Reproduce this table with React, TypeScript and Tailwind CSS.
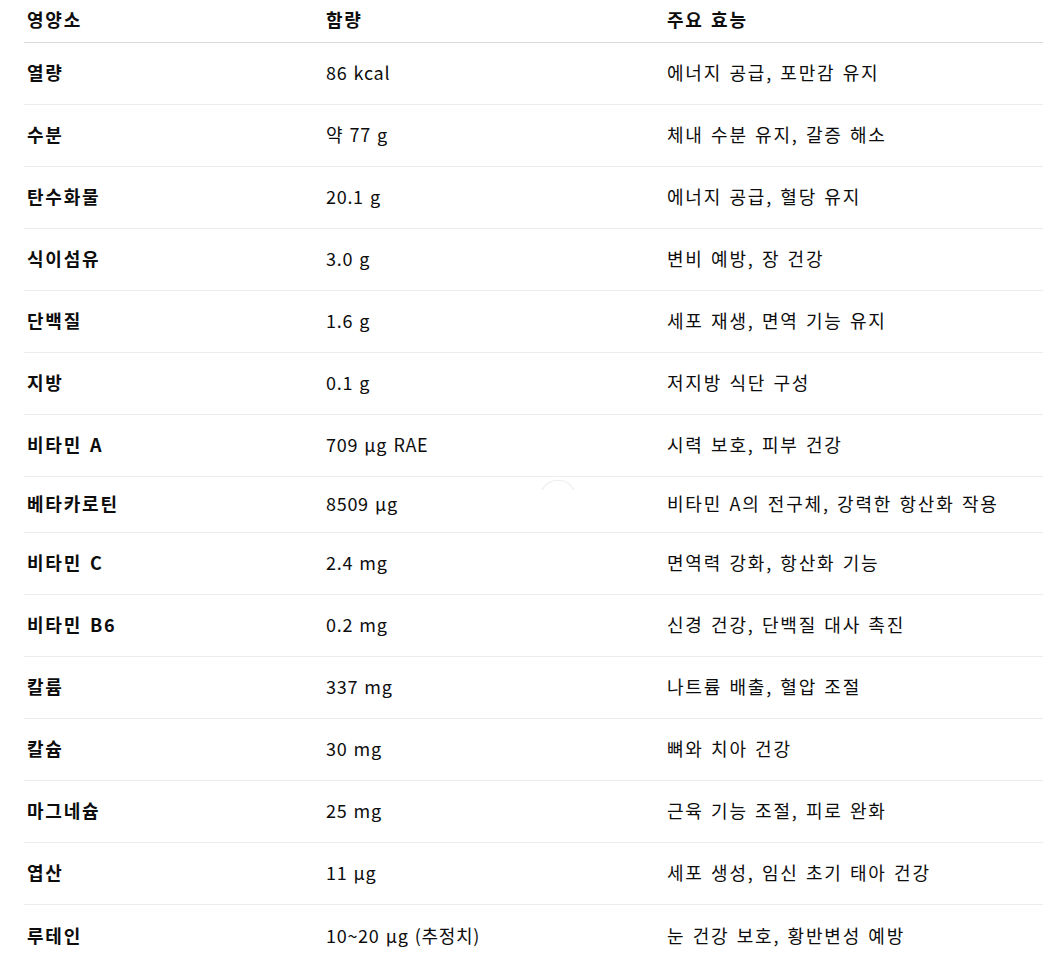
import React from "react";

const rows: [string, string, string][] = [
  ["열량", "86 kcal", "에너지 공급, 포만감 유지"],
  ["수분", "약 77 g", "체내 수분 유지, 갈증 해소"],
  ["탄수화물", "20.1 g", "에너지 공급, 혈당 유지"],
  ["식이섬유", "3.0 g", "변비 예방, 장 건강"],
  ["단백질", "1.6 g", "세포 재생, 면역 기능 유지"],
  ["지방", "0.1 g", "저지방 식단 구성"],
  ["비타민 A", "709 µg RAE", "시력 보호, 피부 건강"],
  ["베타카로틴", "8509 µg", "비타민 A의 전구체, 강력한 항산화 작용"],
  ["비타민 C", "2.4 mg", "면역력 강화, 항산화 기능"],
  ["비타민 B6", "0.2 mg", "신경 건강, 단백질 대사 촉진"],
  ["칼륨", "337 mg", "나트륨 배출, 혈압 조절"],
  ["칼슘", "30 mg", "뼈와 치아 건강"],
  ["마그네슘", "25 mg", "근육 기능 조절, 피로 완화"],
  ["엽산", "11 µg", "세포 생성, 임신 초기 태아 건강"],
  ["루테인", "10~20 µg (추정치)", "눈 건강 보호, 황반변성 예방"],
];

export default function App() {
  return (
    <div
      className="w-[1043px] min-h-[972px] bg-white text-[#0d0d0d] relative overflow-hidden"
      style={{ fontFamily: '"Noto Sans CJK KR", "Noto Sans", sans-serif' }}
    >
      <div className="ml-[24px] w-[1019px]">
        <div className="grid grid-cols-[298px_341px_1fr] h-[43px] border-b border-[#d9d9d9] items-center text-[18px] font-bold pb-[4px]">
          <div className="pl-[3px] tracking-[1.8px] [word-spacing:1.5px]">영양소</div>
          <div className="pl-[4px] tracking-[1.8px] [word-spacing:1.5px]">함량</div>
          <div className="pl-[4px] tracking-[1.8px] [word-spacing:1.5px]">주요 효능</div>
        </div>
        {rows.map((r, i) => (
          <div
            key={i}
            className={`grid grid-cols-[298px_341px_1fr] items-center text-[18px] pb-[2px] ${
              i === 7 ? "h-[56px]" : "h-[62px]"
            } ${i < rows.length - 1 ? "border-b border-[#ececec]" : ""}`}
          >
            <div className="pl-[3px] font-bold tracking-[1.8px] [word-spacing:2px]">{r[0]}</div>
            <div className="pl-[4px] tracking-[0.7px] [word-spacing:1.5px]">{r[1]}</div>
            <div className="pl-[4px] tracking-[1.8px] [word-spacing:1.5px] whitespace-nowrap">{r[2]}</div>
          </div>
        ))}
      </div>
      <svg
        className="absolute left-[540px] top-[478px]"
        width="36"
        height="14"
        viewBox="0 0 36 14"
      >
        <path d="M2 12 A18 18 0 0 1 34 12" fill="none" stroke="#ececec" strokeWidth="1.2" />
      </svg>
    </div>
  );
}
